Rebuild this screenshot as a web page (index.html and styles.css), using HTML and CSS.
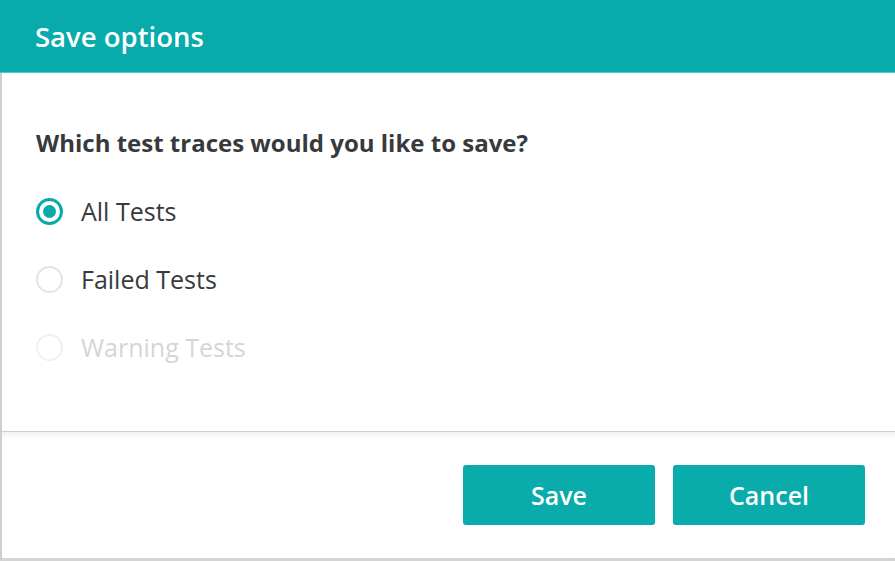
FILE: index.html
```html
<!DOCTYPE html>
<html lang="en">

<head>
    <meta charset="UTF-8">
    <meta name="viewport" content="width=device-width, initial-scale=1.0">
    <title>Save options</title>
    <link rel="stylesheet" href="styles.css">
</head>

<body>
    <div class="dialog">
        <div class="dialog-head">Save options</div>
        <div class="dialog-body">
            <p class="question">Which test traces would you like to save?</p>
            <ul class="choices">
                <li class="choice checked"><span class="radio"></span>All Tests</li>
                <li class="choice"><span class="radio"></span>Failed Tests</li>
                <li class="choice disabled"><span class="radio"></span>Warning Tests</li>
            </ul>
        </div>
        <div class="dialog-foot">
            <button class="btn">Save</button>
            <button class="btn">Cancel</button>
        </div>
    </div>
</body>

</html>
```

FILE: styles.css
```css
body,
p,
ul,
li {
    margin: 0;
    padding: 0;
    list-style: none;
}

body {
    font-family: "Open Sans", "Liberation Sans", sans-serif;
    color: #363a3d;
    background: #fff;
}

.dialog {
    width: 895px;
    height: 561px;
    display: flex;
    flex-direction: column;
    box-sizing: border-box;
    border-left: 2px solid #cfcfcf;
    border-bottom: 3px solid #d4d4d4;
}

.dialog-head {
    height: 73px;
    margin-left: -2px;
    padding-left: 35px;
    background: #08abab;
    color: #fff;
    font-size: 27.5px;
    font-weight: 600;
    line-height: 74px;
    border-bottom: 1px solid #5fc2c2;
    box-sizing: border-box;
}

.dialog-body {
    height: 358px;
    padding: 50px 0 0 34px;
    box-sizing: border-box;
}

.question {
    font-size: 24px;
    font-weight: 700;
    line-height: 40px;
    margin-bottom: 14px;
}

.choice {
    display: flex;
    align-items: center;
    height: 68px;
    font-size: 25px;
}

.radio {
    width: 27px;
    height: 27px;
    box-sizing: border-box;
    border: 2px solid #e3e3e3;
    border-radius: 50%;
    margin-right: 18px;
    position: relative;
}

.checked .radio {
    border: 3px solid #08abab;
}

.checked .radio::after {
    content: "";
    position: absolute;
    left: 4px;
    top: 4px;
    width: 13px;
    height: 13px;
    border-radius: 50%;
    background: #08abab;
}

.disabled {
    color: #d3d6d9;
}

.disabled .radio {
    border-color: #f0f0f0;
}

.dialog-foot {
    flex: 1;
    display: flex;
    justify-content: flex-end;
    align-items: flex-start;
    gap: 18px;
    padding: 33px 30px 0 0;
    border-top: 1px solid #cdcdcd;
    box-shadow: inset 0 6px 6px -4px rgba(0, 0, 0, .08);
}

.btn {
    width: 192px;
    height: 60px;
    border: 0;
    border-radius: 3px;
    background: #0aabab;
    color: #fff;
    font-family: inherit;
    font-size: 25px;
    font-weight: 600;
}
```
